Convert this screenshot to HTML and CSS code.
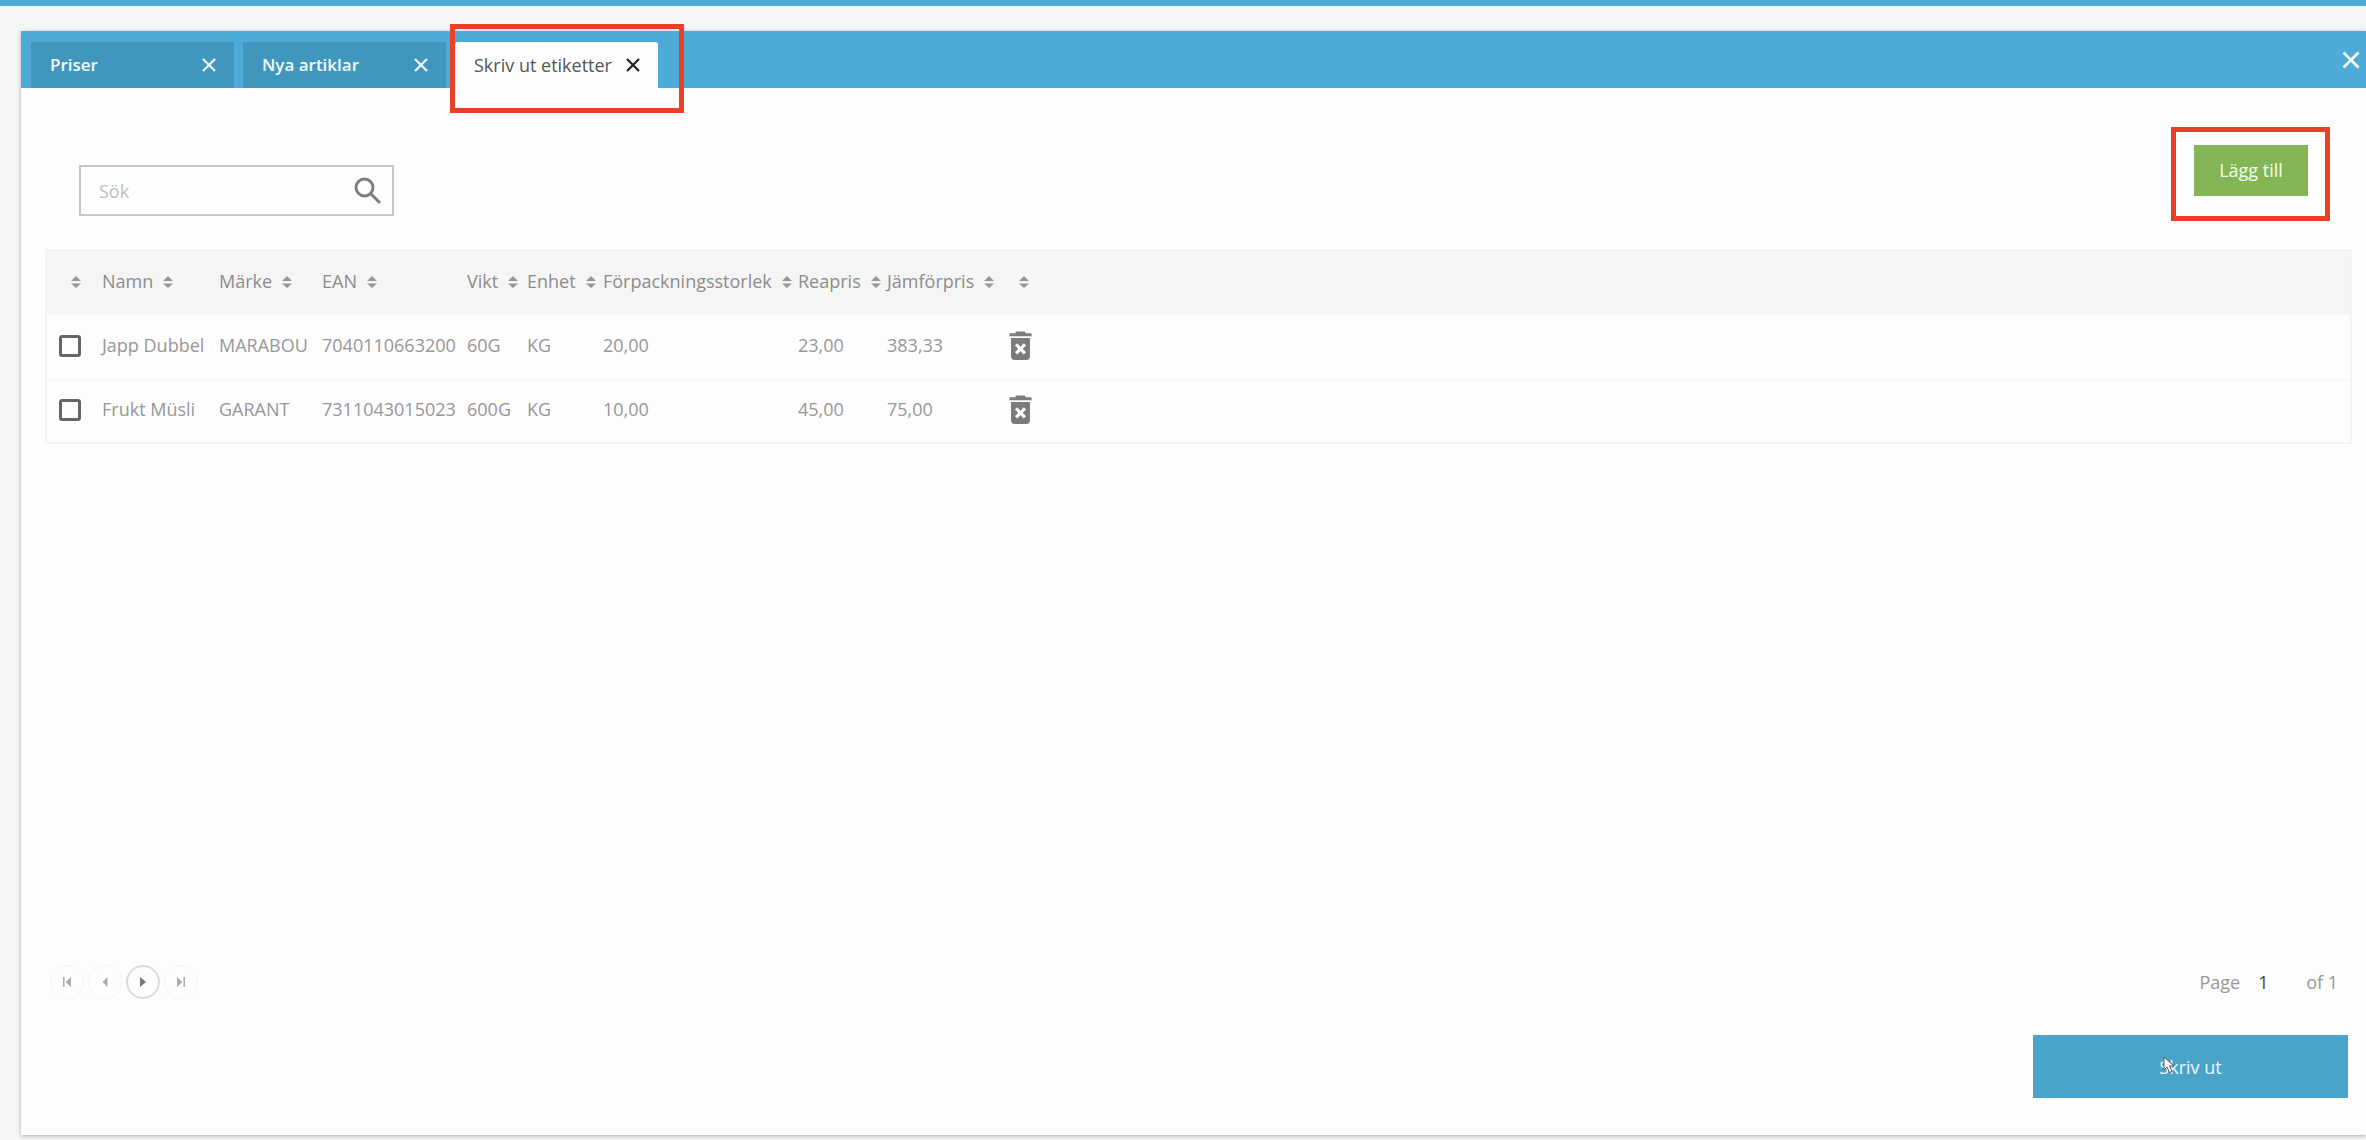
FILE: index.html
```html
<!DOCTYPE html>
<html lang="sv">
<head>
    <meta charset="UTF-8">
    <meta name="viewport" content="width=device-width, initial-scale=1.0">
    <title>Skriv ut etiketter</title>
    <link rel="stylesheet" href="styles.css">
</head>
<body>
    <svg class="symbols" aria-hidden="true">
        <symbol id="close" viewBox="0 0 16 16">
            <path d="M2 2 L14 14 M14 2 L2 14" fill="none" stroke="currentColor" stroke-width="2.2"/>
        </symbol>
        <symbol id="sort" viewBox="0 0 10 12">
            <path d="M5 0 L10 5 H0 Z M0 7.500 H10 L5 12 Z" fill="currentColor"/>
        </symbol>
        <symbol id="trash" viewBox="5 2 14 19">
            <path fill="currentColor" fill-rule="evenodd" d="M6 19c0 1.100.9 2 2 2h8c1.100 0 2-.9 2-2V7H6v12zm2.460-7.120l1.410-1.410L12 12.590l2.120-2.120 1.410 1.410L13.410 14l2.120 2.120-1.410 1.410L12 15.410l-2.120 2.120-1.410-1.410L10.590 14l-2.130-2.120zM15.500 4l-1-1h-5l-1 1H5v2h14V4z"/>
        </symbol>
    </svg>

    <div class="top-bar"></div>

    <main class="panel">
        <header class="tabs">
            <div class="tab">
                <a href="#">Priser</a>
                <button type="button" class="tab-close" aria-label="Stäng"><svg><use href="#close"/></svg></button>
            </div>
            <div class="tab">
                <a href="#">Nya artiklar</a>
                <button type="button" class="tab-close" aria-label="Stäng"><svg><use href="#close"/></svg></button>
            </div>
            <div class="tab active">
                <a href="#">Skriv ut etiketter</a>
                <button type="button" class="tab-close" aria-label="Stäng"><svg><use href="#close"/></svg></button>
                <span class="marker marker-tab"></span>
            </div>
            <button type="button" class="panel-close" aria-label="Stäng alla"><svg><use href="#close"/></svg></button>
        </header>

        <section class="content">
            <div class="toolbar">
                <form class="search">
                    <input type="text" placeholder="Sök" aria-label="Sök">
                    <button type="button" aria-label="Sök">
                        <svg viewBox="0 0 28 28"><circle cx="10.500" cy="10.500" r="8.500"/><path d="M16.500 16.500 L26 26"/></svg>
                    </button>
                </form>
                <div class="add">
                    <button type="button" class="add-button">Lägg till</button>
                    <span class="marker marker-add"></span>
                </div>
            </div>

            <table class="articles">
                <colgroup>
                    <col class="col-check">
                    <col class="col-name">
                    <col class="col-brand">
                    <col class="col-ean">
                    <col class="col-weight">
                    <col class="col-unit">
                    <col class="col-size">
                    <col class="col-sale">
                    <col class="col-compare">
                    <col>
                </colgroup>
                <thead>
                    <tr>
                        <th><svg class="sort"><use href="#sort"/></svg></th>
                        <th>Namn<svg class="sort"><use href="#sort"/></svg></th>
                        <th>Märke<svg class="sort"><use href="#sort"/></svg></th>
                        <th>EAN<svg class="sort"><use href="#sort"/></svg></th>
                        <th>Vikt<svg class="sort"><use href="#sort"/></svg></th>
                        <th>Enhet<svg class="sort"><use href="#sort"/></svg></th>
                        <th>Förpackningsstorlek<svg class="sort"><use href="#sort"/></svg></th>
                        <th>Reapris<svg class="sort"><use href="#sort"/></svg></th>
                        <th>Jämförpris<svg class="sort"><use href="#sort"/></svg></th>
                        <th><svg class="sort"><use href="#sort"/></svg></th>
                    </tr>
                </thead>
                <tbody>
                    <tr>
                        <td><input type="checkbox" aria-label="Välj Japp Dubbel"></td>
                        <td>Japp Dubbel</td>
                        <td>MARABOU</td>
                        <td>7040110663200</td>
                        <td>60G</td>
                        <td>KG</td>
                        <td>20,00</td>
                        <td>23,00</td>
                        <td>383,33</td>
                        <td><button type="button" class="delete" aria-label="Ta bort"><svg><use href="#trash"/></svg></button></td>
                    </tr>
                    <tr>
                        <td><input type="checkbox" aria-label="Välj Frukt Müsli"></td>
                        <td>Frukt Müsli</td>
                        <td>GARANT</td>
                        <td>7311043015023</td>
                        <td>600G</td>
                        <td>KG</td>
                        <td>10,00</td>
                        <td>45,00</td>
                        <td>75,00</td>
                        <td><button type="button" class="delete" aria-label="Ta bort"><svg><use href="#trash"/></svg></button></td>
                    </tr>
                </tbody>
            </table>

            <footer class="footer">
                <div class="paging">
                    <nav class="pager">
                        <button type="button" aria-label="Första"><svg viewBox="0 0 8 10"><path d="M0 0h1.500v10H0zM8 0v10L2.500 5z"/></svg></button>
                        <button type="button" aria-label="Föregående"><svg viewBox="0 0 8 10"><path d="M6.500 0v10L1.500 5z"/></svg></button>
                        <button type="button" class="current" aria-label="Nästa"><svg viewBox="0 0 8 10"><path d="M1 0v10L7 5z"/></svg></button>
                        <button type="button" aria-label="Sista"><svg viewBox="0 0 8 10"><path d="M6.500 0H8v10H6.500zM0 0v10L5.500 5z"/></svg></button>
                    </nav>
                    <div class="page-info">
                        <label for="page">Page</label>
                        <input type="text" id="page" value="1">
                        <span>of 1</span>
                    </div>
                </div>
                <button type="button" class="print-button">
                    Skriv ut
                    <svg class="cursor" viewBox="0 0 12 18"><path d="M1 1v13l3-3 2.500 5.500 2.500-1L6.500 10H11z"/></svg>
                </button>
            </footer>
        </section>
    </main>
</body>
</html>
```
FILE: styles.css
```css
* {
    margin: 0;
    padding: 0;
    box-sizing: border-box;
}

body {
    display: flex;
    flex-direction: column;
    min-height: 100vh;
    background-color: #f5f5f5;
    color: #979797;
    font-family: 'Open Sans', 'Noto Sans', sans-serif;
    font-size: 18px;
    line-height: 24px;
    overflow-x: hidden;
}

button,
input {
    font: inherit;
    color: inherit;
    border: none;
    background: none;
}

button {
    cursor: pointer;
}

a {
    color: inherit;
    text-decoration: none;
}

svg {
    display: block;
}

.symbols {
    position: absolute;
    width: 0;
    height: 0;
}

.top-bar {
    height: 6px;
    background-color: #4eabd8;
}

.panel {
    flex: 1;
    display: flex;
    flex-direction: column;
    margin: 25px 0 5px 21px;
    background-color: #fdfdfd;
    box-shadow: 0 1px 4px rgba(0, 0, 0, 0.3);
}

/* Tabs */
.tabs {
    display: flex;
    align-items: flex-end;
    gap: 9px;
    height: 57px;
    padding-left: 10px;
    background-color: #4eabd8;
}

.tab {
    position: relative;
    display: flex;
    align-items: center;
    justify-content: space-between;
    width: 203px;
    height: 46px;
    padding: 0 17px 0 19px;
    background-color: #4196bd;
    color: #f2fbff;
    font-size: 17px;
    font-weight: 600;
    white-space: nowrap;
}

.tab.active {
    background-color: #fdfdfd;
    color: #555;
    font-size: 18px;
    font-weight: 400;
    border-radius: 3px 3px 0 0;
}

.tab-close svg {
    width: 16px;
    height: 16px;
}

.tab.active .tab-close {
    color: #222;
}

.panel-close {
    align-self: center;
    margin-left: auto;
    margin-right: 5px;
    color: #f2fbff;
}

.panel-close svg {
    width: 20px;
    height: 20px;
}

/* Red frames around the highlighted controls */
.marker {
    position: absolute;
    border: 5px solid #ea4025;
    pointer-events: none;
}

.marker-tab {
    inset: -18px -26px -25px -5px;
}

.marker-add {
    inset: -18px -22px -25px -23px;
}

/* Content */
.content {
    flex: 1;
    display: flex;
    flex-direction: column;
    padding: 57px 14px 37px 24px;
}

.toolbar {
    display: flex;
    align-items: flex-start;
    justify-content: space-between;
    padding: 0 44px 33px 34px;
}

.search {
    display: flex;
    align-items: center;
    width: 315px;
    height: 51px;
    margin-top: 20px;
    padding: 0 10px 0 18px;
    border: 2px solid #c6c6c6;
}

.search input {
    flex: 1;
    min-width: 0;
    outline: none;
}

.search input::placeholder {
    color: #bdbdbd;
    opacity: 1;
}

.search svg {
    width: 28px;
    height: 28px;
    fill: none;
    stroke: #7d7d7d;
    stroke-width: 3;
}

.add {
    position: relative;
}

.add-button {
    display: block;
    width: 114px;
    height: 51px;
    padding-bottom: 2px;
    background-color: #84b656;
    color: #f7fff0;
}

/* Table */
.articles {
    width: 100%;
    table-layout: fixed;
    border-collapse: collapse;
    border: 2px solid #f3f3f3;
}

.col-check { width: 49px; }
.col-name { width: 117px; }
.col-brand { width: 103px; }
.col-ean { width: 145px; }
.col-weight { width: 60px; }
.col-unit { width: 76px; }
.col-size { width: 195px; }
.col-sale { width: 89px; }
.col-compare { width: 122px; }

.articles th,
.articles td {
    padding: 0 0 4px 7px;
    font-weight: 400;
    text-align: left;
    white-space: nowrap;
    vertical-align: middle;
}

.articles th {
    height: 65px;
    background-color: #f5f5f5;
    color: #8c8c8c;
}

.articles td {
    height: 64px;
    border-bottom: 1px solid #f5f5f5;
}

.articles th:first-child,
.articles td:first-child {
    padding: 0 14px 4px 0;
    text-align: right;
}

.sort {
    display: inline-block;
    width: 10px;
    height: 12px;
    margin-left: 10px;
    color: #979797;
}

.articles input {
    appearance: none;
    display: inline-block;
    width: 22px;
    height: 22px;
    border: 3px solid #666;
    border-radius: 3px;
    vertical-align: middle;
}

.delete {
    display: block;
    color: #7b7b7b;
}

.delete svg {
    width: 23px;
    height: 30px;
}

/* Footer */
.footer {
    display: flex;
    flex-direction: column;
    gap: 36px;
    margin-top: auto;
    padding-right: 4px;
}

.paging {
    display: flex;
    align-items: center;
    justify-content: space-between;
    padding: 0 10px 0 5px;
}

.pager {
    display: flex;
    gap: 4px;
}

.pager button {
    display: flex;
    align-items: center;
    justify-content: center;
    width: 34px;
    height: 34px;
    border: 1px solid #f5f5f5;
    border-radius: 50%;
}

.pager svg {
    width: 8px;
    height: 10px;
    fill: #aaa;
}

.pager .current {
    border: 2px solid #dcdcdc;
}

.pager .current svg {
    fill: #777;
}

.page-info {
    display: flex;
    align-items: center;
}

.page-info input {
    width: 48px;
    margin-left: 18px;
    color: #444;
}

.print-button {
    position: relative;
    align-self: flex-end;
    width: 315px;
    height: 63px;
    background-color: #4aa3c9;
    color: #e9faff;
}

.cursor {
    position: absolute;
    top: 21px;
    left: 130px;
    width: 12px;
    height: 18px;
    fill: #fff;
    stroke: #555;
    stroke-width: 1;
}
```
